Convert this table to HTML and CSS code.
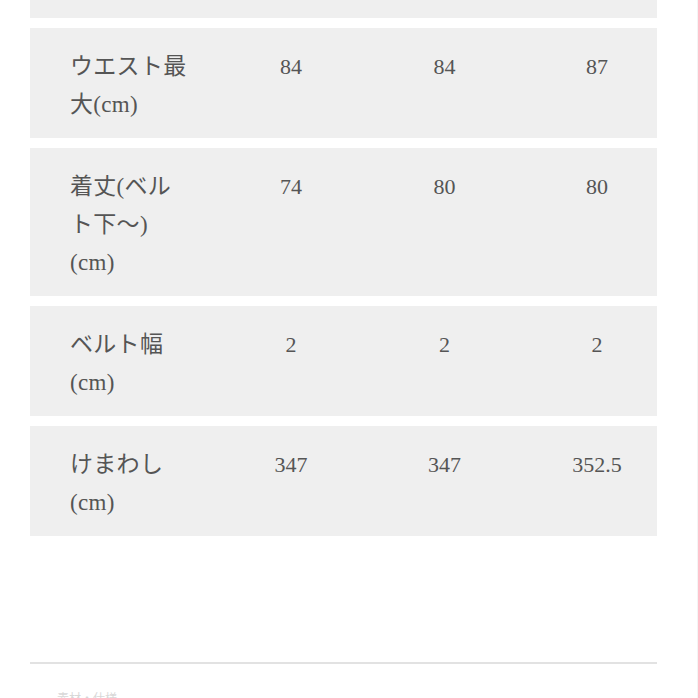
FILE: index.html
```html
<!DOCTYPE html>
<html lang="ja">
<head>
<meta charset="utf-8">
<title>サイズ表</title>
<link rel="stylesheet" href="styles.css">
</head>
<body>
<div class="page">
  <div class="table">
    <div class="row row-tail"></div>
    <div class="row">
      <div class="label">ウエスト最<br>大(cm)</div>
      <div class="val">84</div>
      <div class="val">84</div>
      <div class="val last">87</div>
    </div>
    <div class="row">
      <div class="label">着丈(ベル<br>ト下〜)<br>(cm)</div>
      <div class="val">74</div>
      <div class="val">80</div>
      <div class="val last">80</div>
    </div>
    <div class="row">
      <div class="label">ベルト幅<br>(cm)</div>
      <div class="val">2</div>
      <div class="val">2</div>
      <div class="val last">2</div>
    </div>
    <div class="row">
      <div class="label">けまわし<br>(cm)</div>
      <div class="val">347</div>
      <div class="val">347</div>
      <div class="val last">352.5</div>
    </div>
  </div>
  <div class="rule"></div>
  <div class="note">素材・仕様</div>
</div>
</body>
</html>
```

FILE: styles.css
```css
html, body {
  margin: 0;
  padding: 0;
  background: #ffffff;
}

body {
  width: 698px;
  height: 698px;
  overflow: hidden;
  border-right: 1px solid #f4f4f4;
  box-sizing: border-box;
}

.page {
  padding-left: 30px;
  width: 627px;
  font-family: "Liberation Serif", "Noto Sans CJK JP", serif;
  color: #555555;
}

.table {
  display: flex;
  flex-direction: column;
  gap: 10px;
}

.row {
  display: grid;
  grid-template-columns: 144px 154px 153px 136px;
  background: #efefef;
  padding: 20px 0 14px 40px;
  font-size: 23px;
  line-height: 38px;
}

.row-tail {
  height: 18px;
  padding: 0;
}

.label {
  font-family: "Liberation Serif", "Noto Sans CJK JP", serif;
  letter-spacing: 0.3px;
  white-space: nowrap;
}

.val {
  text-align: center;
  font-size: 22px;
}

.val.last {
  padding-left: 16px;
}

.rule {
  margin-top: 126px;
  height: 2px;
  background: #e2e2e2;
}

.note {
  margin-top: 28px;
  padding-left: 27px;
  font-size: 12px;
  line-height: 14px;
  color: #d8d8d8;
}
```
